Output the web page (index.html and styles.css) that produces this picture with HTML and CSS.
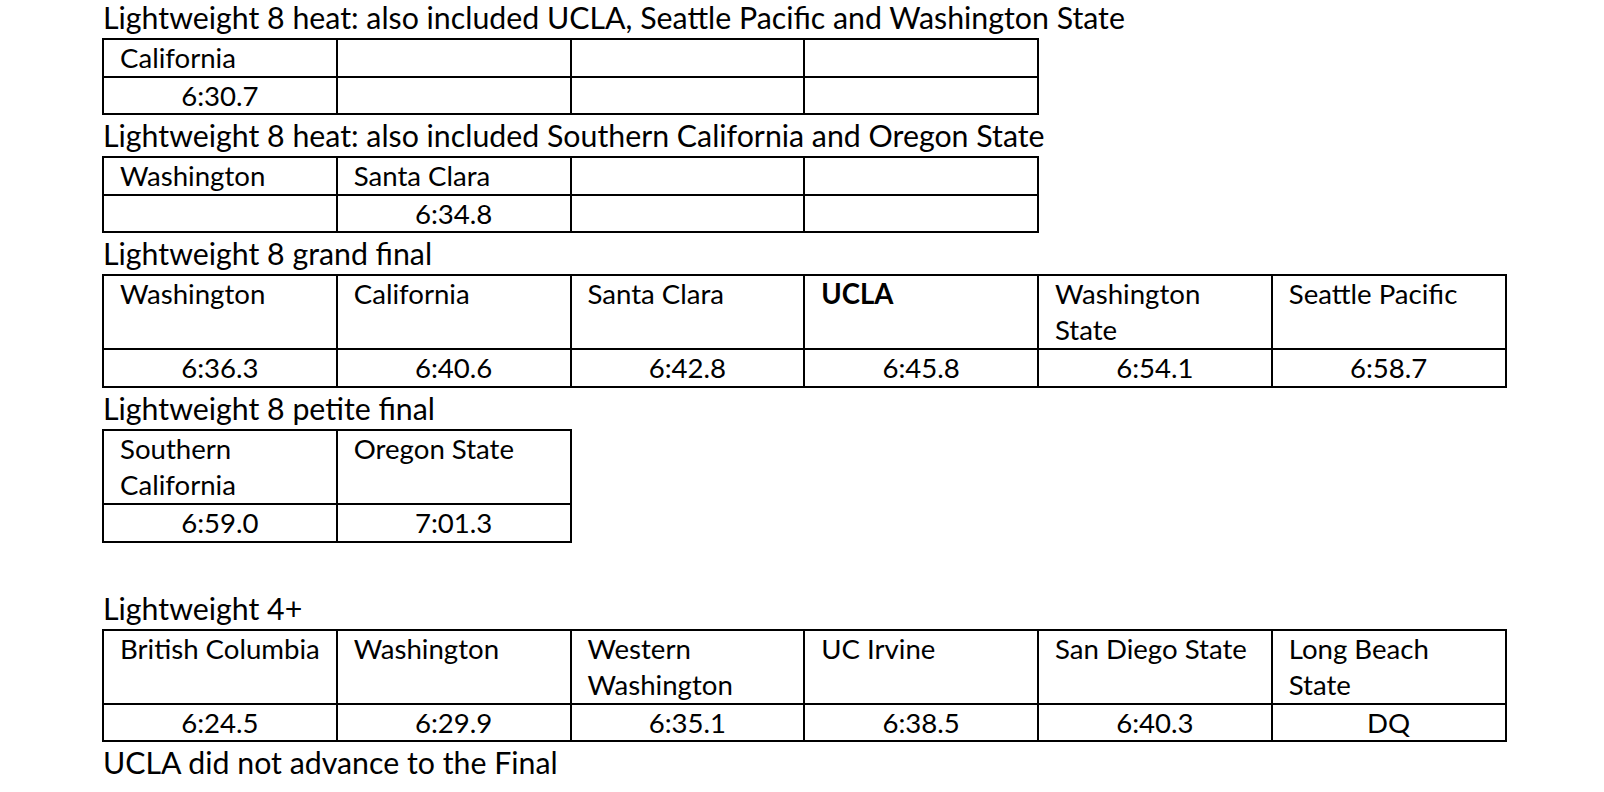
FILE: index.html
```html
<!DOCTYPE html>
<html lang="en">
<head>
<meta charset="utf-8">
<title>Lightweight results</title>
<link rel="stylesheet" href="styles.css">
</head>
<body>
<main class="doc">
  <p class="title first">Lightweight 8 heat: also included UCLA, Seattle Pacific and Washington State</p>
  <table class="results t4">
    <colgroup><col class="c"><col class="c"><col class="c"><col class="c"></colgroup>
    <tr class="names"><td>California</td><td></td><td></td><td></td></tr>
    <tr class="times"><td>6:30.7</td><td></td><td></td><td></td></tr>
  </table>

  <p class="title">Lightweight 8 heat: also included Southern California and Oregon State</p>
  <table class="results t4">
    <colgroup><col class="c"><col class="c"><col class="c"><col class="c"></colgroup>
    <tr class="names"><td>Washington</td><td>Santa Clara</td><td></td><td></td></tr>
    <tr class="times"><td></td><td>6:34.8</td><td></td><td></td></tr>
  </table>

  <p class="title">Lightweight 8 grand final</p>
  <table class="results t6">
    <colgroup><col class="c"><col class="c"><col class="c"><col class="c"><col class="c"><col class="c"></colgroup>
    <tr class="names tall"><td>Washington</td><td>California</td><td>Santa Clara</td><td><strong>UCLA</strong></td><td>Washington<br>State</td><td>Seattle Pacific</td></tr>
    <tr class="times"><td>6:36.3</td><td>6:40.6</td><td>6:42.8</td><td>6:45.8</td><td>6:54.1</td><td>6:58.7</td></tr>
  </table>

  <p class="title">Lightweight 8 petite final</p>
  <table class="results t2">
    <colgroup><col class="c"><col class="c"></colgroup>
    <tr class="names tall"><td>Southern<br>California</td><td>Oregon State</td></tr>
    <tr class="times"><td>6:59.0</td><td>7:01.3</td></tr>
  </table>

  <p class="title blank">&nbsp;</p>
  <p class="title">Lightweight 4+</p>
  <table class="results t6">
    <colgroup><col class="c"><col class="c"><col class="c"><col class="c"><col class="c"><col class="c"></colgroup>
    <tr class="names tall"><td>British Columbia</td><td>Washington</td><td>Western<br>Washington</td><td>UC Irvine</td><td>San Diego State</td><td>Long Beach<br>State</td></tr>
    <tr class="times"><td>6:24.5</td><td>6:29.9</td><td>6:35.1</td><td>6:38.5</td><td>6:40.3</td><td>DQ</td></tr>
  </table>
  <p class="title">UCLA did not advance to the Final</p>
</main>
</body>
</html>
```

FILE: styles.css
```css
html, body {
  margin: 0;
  padding: 0;
  background: #ffffff;
}

body {
  width: 1604px;
  height: 792px;
  overflow: hidden;
  color: #000000;
  font-family: Lato, "Open Sans", "Liberation Sans", sans-serif;
}

.doc {
  padding-left: 102px;
  display: flex;
  flex-direction: column;
  align-items: flex-start;
}

.title {
  margin: 0;
  padding-left: 1px;
  font-size: 30.3px;
  line-height: 41px;
  white-space: nowrap;
}

.title.first {
  margin-top: -3px;
}

.title.blank {
  line-height: 45px;
}

.results {
  border-collapse: collapse;
  table-layout: fixed;
  font-size: 27.6px;
}

.results .c {
  width: 233.75px;
}

.t2 { width: 467.5px; }
.t4 { width: 935px; }
.t6 { width: 1402.5px; }

.results td {
  border: 2px solid #000000;
  padding: 1px 4px 0 16px;
  line-height: 34.6px;
  vertical-align: top;
  white-space: nowrap;
  overflow: hidden;
}

.results .tall td {
  line-height: 36px;
  padding-top: 0;
}

.results .times td {
  text-align: center;
  padding: 1px 4px 0 4px;
}

.results strong {
  font-weight: 700;
}
```
